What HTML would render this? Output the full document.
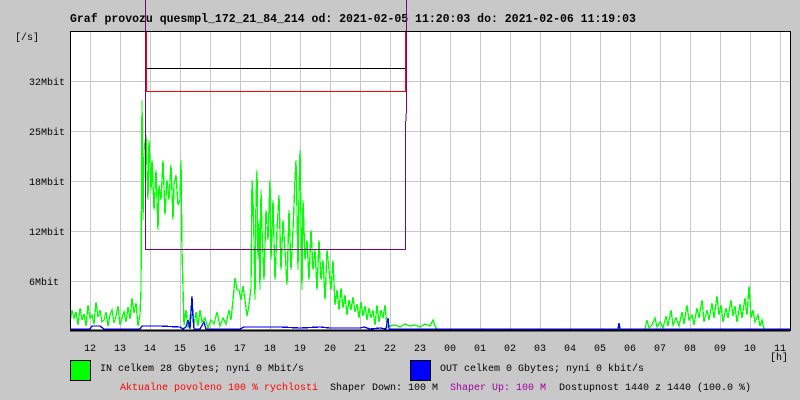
<!DOCTYPE html>
<html><head><meta charset="utf-8"><style>
html,body{margin:0;padding:0;background:#c8c8c8;width:800px;height:400px;overflow:hidden}
svg{display:block}
text{font-family:"Liberation Mono","DejaVu Sans Mono",monospace;font-size:10px;fill:#000}
</style></head><body>
<svg width="800" height="400" xmlns="http://www.w3.org/2000/svg" shape-rendering="crispEdges">
<rect x="0" y="0" width="800" height="400" fill="#c8c8c8"/>
<text x="70" y="22" style="font-size:11.5px;font-weight:bold">Graf provozu quesmpl_172_21_84_214 od: 2021-02-05 11:20:03 do: 2021-02-06 11:19:03</text>
<rect x="70" y="31" width="720" height="299" fill="#fff"/>
<g stroke="#c8c8c8" stroke-width="1">
<path d="M90.5 31V330M120.5 31V330M150.5 31V330M180.5 31V330M210.5 31V330M240.5 31V330M270.5 31V330M300.5 31V330M330.5 31V330M360.5 31V330M390.5 31V330M420.5 31V330M450.5 31V330M480.5 31V330M510.5 31V330M540.5 31V330M570.5 31V330M600.5 31V330M630.5 31V330M660.5 31V330M690.5 31V330M720.5 31V330M750.5 31V330M780.5 31V330"/>
<path d="M70 81.5H790M70 131.5H790M70 181.5H790M70 231.5H790M70 281.5H790"/>
</g>
<text x="15" y="40">[/s]</text>
<text x="29" y="85">32Mbit</text>
<text x="29" y="135">25Mbit</text>
<text x="29" y="185">18Mbit</text>
<text x="29" y="235">12Mbit</text>
<text x="29" y="285">6Mbit</text>
<g fill="none" stroke-width="1.3">
<polyline stroke="#00ff00" points="70,322 72,310 74,318 76,312 78,325 80,308 82,320 84,314 86,326 88,305 90,318 92,315 94,324 96,302 98,317 100,310 102,322 104,320 106,312 108,326 110,315 112,310 114,323 116,316 118,306 120,325 122,318 124,312 126,322 128,307 130,319 132,298 134,313 136,303 138,326 140,315 141,290 142,100 143,220 144,150 146,135 148,200 149,140 151,190 152,160 154,210 156,170 158,230 159,185 161,200 163,160 165,215 167,180 169,200 171,165 173,220 174,185 176,175 178,205 180,200 181,160 182,250 184,325 186,310 188,328 190,318 192,300 194,325 196,312 198,326 200,310 202,322 205,318 208,328 211,320 214,324 217,312 220,326 223,318 226,324 229,310 231,320 233,300 235,278 237,290 239,290 241,300 243,286 245,300 247,316 249,305 251,288 252,180 253,200 254,240 255,300 256,200 257,170 258,260 259,220 260,290 261,190 262,230 264,280 266,210 268,240 270,180 271,260 273,200 275,280 277,230 279,195 281,270 283,220 285,250 287,285 289,210 291,270 293,230 295,180 296,160 297,210 298,270 299,195 300,150 301,220 302,290 303,200 305,260 307,240 309,280 311,230 313,270 315,250 317,290 319,240 321,280 323,260 325,300 327,250 329,270 331,290 333,260 335,305 337,290 339,310 341,288 343,308 345,295 347,315 349,300 351,310 353,297 355,312 357,304 359,318 361,302 363,316 365,306 367,320 369,308 371,318 373,310 375,325 377,305 379,322 381,310 383,318 385,305 387,327 390,326 395,325 400,327 405,324 410,326 415,325 420,327 425,324 430,326 433,320 435,326 437,329 645,329 647,320 649,328 652,325 655,318 657,327 660,322 663,328 666,316 668,326 671,310 673,325 676,318 679,326 682,312 684,324 687,305 689,320 692,315 694,325 697,308 699,318 702,300 704,322 707,310 709,320 712,303 714,318 717,296 719,315 721,305 723,322 726,308 728,318 731,300 733,316 735,306 737,322 740,304 742,318 745,298 747,315 749,286 750,300 751,318 753,310 755,322 758,315 760,326 762,320 764,329 790,329"/>
<polyline stroke="#0000ff" points="70,329 90,329 92,326 100,326 104,329 140,329 142,326 160,326 180,327 183,329 186,327 188,320 190,329 192,296 193,318 194,329 200,329 204,322 206,329 240,329 244,327 260,327 280,327 300,328 320,327 330,328 360,328 364,327 370,329 380,328 386,329 388,318 389,329 440,329 618,329 619,323 620,329 790,329"/>
</g>
<g fill="none" stroke-width="1">
<polyline stroke="#000" points="146.5,31 146.5,68.5 405.5,68.5 405.5,31"/>
<polyline stroke="#ff0000" points="70,31.5 146.5,31.5 146.5,91.5 405.5,91.5 405.5,31.5 790,31.5"/>
<polyline stroke="#800080" points="145.5,0 145.5,249.5 405.5,249.5 405.5,125 406.5,110 406.5,0"/>
</g>
<rect x="70.5" y="31.5" width="720" height="299" fill="none" stroke="#000" stroke-width="1"/>
<line x1="70" y1="330.5" x2="790" y2="330.5" stroke="#000" stroke-width="2"/>
<g>
<text x="84" y="351">12</text><text x="114" y="351">13</text><text x="144" y="351">14</text><text x="174" y="351">15</text><text x="204" y="351">16</text><text x="234" y="351">17</text><text x="264" y="351">18</text><text x="294" y="351">19</text><text x="324" y="351">20</text><text x="354" y="351">21</text><text x="384" y="351">22</text><text x="414" y="351">23</text><text x="444" y="351">00</text><text x="474" y="351">01</text><text x="504" y="351">02</text><text x="534" y="351">03</text><text x="564" y="351">04</text><text x="594" y="351">05</text><text x="624" y="351">06</text><text x="654" y="351">07</text><text x="684" y="351">08</text><text x="714" y="351">09</text><text x="744" y="351">10</text><text x="774" y="351">11</text>
<text x="770" y="360">[h]</text>
</g>
<rect x="70.5" y="360.5" width="20" height="20" fill="#00ff00" stroke="#000"/>
<text x="100" y="371">IN celkem 28 Gbytes; nyní 0 Mbit/s</text>
<rect x="410.5" y="360.5" width="20" height="20" fill="#0000ff" stroke="#000"/>
<text x="440" y="371">OUT celkem 0 Gbytes; nyní 0 kbit/s</text>
<text x="120" y="390" style="fill:#ff0000">Aktualne povoleno 100 % rychlosti</text>
<text x="330" y="390">Shaper Down: 100 M</text>
<text x="450" y="390" style="fill:#a000a0">Shaper Up: 100 M</text>
<text x="559" y="390">Dostupnost 1440 z 1440 (100.0 %)</text>
</svg>
</body></html>
